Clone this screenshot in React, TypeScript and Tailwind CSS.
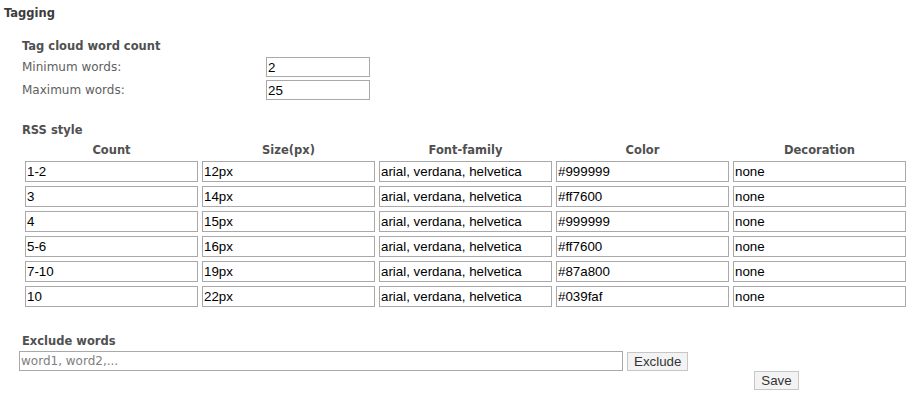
import { useState } from 'react'

const tahoma = "font-['DejaVu_Sans',_'Liberation_Sans',_sans-serif]"
const arial = "font-['Liberation_Sans',_Arial,_sans-serif]"

const rows = [
  { count: '1-2', size: '12px', family: 'arial, verdana, helvetica', color: '#999999', decoration: 'none' },
  { count: '3', size: '14px', family: 'arial, verdana, helvetica', color: '#ff7600', decoration: 'none' },
  { count: '4', size: '15px', family: 'arial, verdana, helvetica', color: '#999999', decoration: 'none' },
  { count: '5-6', size: '16px', family: 'arial, verdana, helvetica', color: '#ff7600', decoration: 'none' },
  { count: '7-10', size: '19px', family: 'arial, verdana, helvetica', color: '#87a800', decoration: 'none' },
  { count: '10', size: '22px', family: 'arial, verdana, helvetica', color: '#039faf', decoration: 'none' },
]

const headers = ['Count', 'Size(px)', 'Font-family', 'Color', 'Decoration']

function TextBox({ value, className = '' }: { value: string; className?: string }) {
  const [text, setText] = useState(value)
  return (
    <input
      value={text}
      onChange={(e) => setText(e.target.value)}
      className={`${arial} block border border-[#a9a9a9] bg-white px-[1px] text-[13.33px] leading-none text-black outline-none ${className}`}
    />
  )
}

function Button({ label, className = '' }: { label: string; className?: string }) {
  return (
    <button
      className={`${arial} block h-[19px] border border-[#c6c6c6] bg-[#f3f3f3] px-[6px] text-[13.33px] leading-none text-[#333] ${className}`}
    >
      {label}
    </button>
  )
}

export default function App() {
  return (
    <div className={`${tahoma} min-h-screen w-[916px] bg-white pt-[5px]`}>
      <h1 className="pl-[4px] text-[11.5px] font-bold leading-[16px] text-[#3c3c3c]">Tagging</h1>

      {/* word count */}
      <div className="mt-[16px] pl-[22px]">
        <h2 className="pt-[1px] text-[11.5px] font-bold leading-[16px] text-[#505050]">Tag cloud word count</h2>
        <div className="mt-[3px] flex flex-col gap-[3px]">
          <div className="flex items-start">
            <span className="w-[244px] pt-[2px] text-[12px] leading-[16px] text-[#606060]">Minimum words:</span>
            <TextBox value="2" className="h-[20px] w-[104px]" />
          </div>
          <div className="flex items-start">
            <span className="w-[244px] pt-[2px] text-[12px] leading-[16px] text-[#606060]">Maximum words:</span>
            <TextBox value="25" className="h-[20px] w-[104px]" />
          </div>
        </div>
      </div>

      {/* rss style */}
      <div className="mt-[22px] pl-[22px]">
        <h2 className="text-[11.5px] font-bold leading-[16px] text-[#505050]">RSS style</h2>
        <div className="mt-[2px] grid grid-cols-[repeat(5,173px)] gap-x-[4px] pl-[3px] pt-[2px]">
          {headers.map((h) => (
            <div key={h} className="text-center text-[11.5px] font-bold leading-[16px] text-[#505050]">
              {h}
            </div>
          ))}
        </div>
        <div className="mt-[3px] grid grid-cols-[repeat(5,173px)] gap-x-[4px] gap-y-[4px] pl-[3px]">
          {rows.map((r) => (
            <>
              <TextBox key={r.count + 'c'} value={r.count} className="h-[21px] w-[173px]" />
              <TextBox key={r.count + 's'} value={r.size} className="h-[21px] w-[173px]" />
              <TextBox key={r.count + 'f'} value={r.family} className="h-[21px] w-[173px]" />
              <TextBox key={r.count + 'k'} value={r.color} className="h-[21px] w-[173px]" />
              <TextBox key={r.count + 'd'} value={r.decoration} className="h-[21px] w-[173px]" />
            </>
          ))}
        </div>
      </div>

      {/* exclude words */}
      <div className="mt-[26px] pl-[19px]">
        <h2 className="pl-[3px] text-[11.5px] font-bold leading-[16px] text-[#505050]">Exclude words</h2>
        <div className="mt-[2px] flex items-start gap-[4px]">
          <input
            placeholder="word1, word2,..."
            className={`${tahoma} block h-[20px] w-[604px] border border-[#a9a9a9] bg-white px-[1px] text-[12px] text-black outline-none placeholder:text-[#808080]`}
          />
          <Button label="Exclude" className="mt-[1px] w-[61px]" />
        </div>
        <div className="pl-[735px]">
          <Button label="Save" className="w-[45px]" />
        </div>
      </div>
    </div>
  )
}
